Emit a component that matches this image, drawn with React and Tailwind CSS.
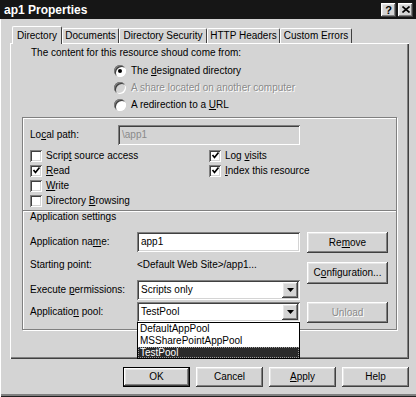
import React from "react";

const raised =
  "shadow-[inset_-1px_-1px_#404040,inset_1px_1px_#ffffff,inset_-2px_-2px_#808080,inset_2px_2px_#e6e6e6]";
const sunken =
  "shadow-[inset_1px_1px_#808080,inset_-1px_-1px_#ffffff,inset_2px_2px_#404040,inset_-2px_-2px_#d4d4d4]";

function U({ children }) {
  return <span className="underline underline-offset-[1px]">{children}</span>;
}

function Radio({ checked, disabled }) {
  return (
    <div
      className={`w-[12px] h-[12px] rounded-full flex items-center justify-center shrink-0 shadow-[inset_1px_1px_#808080,inset_-1px_-1px_#ffffff,inset_2px_2px_#404040] ${
        disabled ? "bg-[#d4d4d4]" : "bg-white"
      }`}
    >
      {checked && <div className="w-[4px] h-[4px] rounded-full bg-black" />}
    </div>
  );
}

function Check({ checked }) {
  return (
    <div className={`w-[12px] h-[12px] bg-white shrink-0 ${sunken} flex items-center justify-center`}>
      {checked && (
        <svg width="9" height="9" viewBox="0 0 9 9">
          <polyline points="1.5,4 3.5,6.5 7.5,1.5" fill="none" stroke="#000" strokeWidth="1.7" />
        </svg>
      )}
    </div>
  );
}

function CheckRow({ checked, children }) {
  return (
    <div className="h-[15px] flex items-center gap-[4px] whitespace-nowrap">
      <Check checked={checked} />
      <span>{children}</span>
    </div>
  );
}

function Button({ children, className = "", disabled, isDefault }) {
  return (
    <div
      className={`flex items-center justify-center bg-[#d4d4d4] whitespace-nowrap ${
        isDefault ? "border border-black" : ""
      } ${className}`}
    >
      <div className={`w-full h-full flex items-center justify-center ${raised}`}>
        <span className={disabled ? "text-[#8a8a8a] [text-shadow:1px_1px_0_#ffffff]" : ""}>{children}</span>
      </div>
    </div>
  );
}

function Arrow() {
  return (
    <div className={`w-[16px] h-[16px] bg-[#d4d4d4] ${raised} flex items-center justify-center`}>
      <svg width="7" height="4" viewBox="0 0 7 4">
        <polygon points="0,0 7,0 3.5,4" fill="#000" />
      </svg>
    </div>
  );
}

function Select({ value, children }) {
  return (
    <div className={`relative w-[163px] h-[20px] bg-white ${sunken} flex items-center pl-[4px] pr-[2px]`}>
      <span className="flex-1">{value}</span>
      <Arrow />
      {children}
    </div>
  );
}

function Tab({ children, selected, className = "" }) {
  return (
    <div
      className={`flex items-center justify-center whitespace-nowrap bg-[#d4d4d4] border-t border-l border-white border-r border-r-[#404040] rounded-t-[2px] ${
        selected ? "h-[18px] -mb-[1px] relative z-10" : "h-[15px]"
      } ${className}`}
    >
      {children}
    </div>
  );
}

export default function App() {
  return (
    <div className="w-[416px] h-[397px] bg-[#d4d4d4] flex flex-col text-[10px] leading-[12px] text-black font-['Liberation_Sans',Arial,sans-serif] overflow-hidden shadow-[inset_1px_0_#ffffff,inset_0_-1px_#202020,inset_0_-3px_#808080]">
      {/* Title bar */}
      <div className="h-[19px] bg-[#161616] flex items-center justify-between pl-[4px] pr-[3px] shrink-0">
        <span className="text-white font-bold text-[12px] leading-[14px]">ap1 Properties</span>
        <div className="flex gap-[2px]">
          <div className={`w-[15px] h-[14px] bg-[#d4d4d4] ${raised} flex items-center justify-center font-bold text-[11px]`}>
            ?
          </div>
          <div className={`w-[15px] h-[14px] bg-[#d4d4d4] ${raised} flex items-center justify-center`}>
            <svg width="8" height="7" viewBox="0 0 8 7">
              <path d="M0.5 0.5 L7.5 6.5 M7.5 0.5 L0.5 6.5" stroke="#000" strokeWidth="1.6" />
            </svg>
          </div>
        </div>
      </div>

      {/* Body */}
      <div className="px-[10px] pt-[7px]">
        <div className="flex items-end h-[17px] pl-[2px]">
          <Tab selected className="w-[50px]">Directory</Tab>
          <Tab className="w-[57px]">Documents</Tab>
          <Tab className="w-[88px]">Directory Security</Tab>
          <Tab className="w-[73px]">HTTP Headers</Tab>
          <Tab className="w-[72px]">Custom Errors</Tab>
        </div>
        <div className="w-[399px] h-[316px] shadow-[inset_1px_1px_#ffffff,inset_-1px_-1px_#404040,inset_-2px_-2px_#808080]">
          <div className="pl-[21px] pt-[5px] h-[15px] leading-[10px]">The content for this resource shoud come from:</div>
          <div className="pl-[104px] mt-[4px] flex flex-col">
            <div className="h-[17px] flex items-center gap-[5px]">
              <Radio checked />
              <span>
                The <U>d</U>esignated directory
              </span>
            </div>
            <div className="h-[17px] flex items-center gap-[5px]">
              <Radio disabled />
              <span className="text-[#8a8a8a] [text-shadow:1px_1px_0_#ffffff]">A share located on another computer</span>
            </div>
            <div className="h-[17px] flex items-center gap-[5px]">
              <Radio />
              <span>
                A redirection to a <U>U</U>RL
              </span>
            </div>
          </div>

          {/* Group box */}
          <div className="ml-[12px] mt-[4px] w-[375px] h-[213px] border border-[#808080] shadow-[inset_1px_1px_#ffffff,1px_1px_#ffffff]">
            <div className="pl-[7px] pt-[7px]">
              <div className="h-[20px] flex items-center">
                <span className="w-[88px]">
                  Lo<U>c</U>al path:
                </span>
                <div className={`w-[182px] h-[20px] bg-[#d4d4d4] ${sunken} flex items-center pl-[4px] text-[#8a8a8a]`}>
                  \app1
                </div>
              </div>
              <div className="mt-[3px] flex">
                <div className="w-[179px] flex flex-col">
                  <CheckRow>
                    Scrip<U>t</U> source access
                  </CheckRow>
                  <CheckRow checked>
                    <U>R</U>ead
                  </CheckRow>
                  <CheckRow>
                    <U>W</U>rite
                  </CheckRow>
                  <CheckRow>
                    Directory <U>B</U>rowsing
                  </CheckRow>
                </div>
                <div className="flex flex-col">
                  <CheckRow checked>
                    Log <U>v</U>isits
                  </CheckRow>
                  <CheckRow checked>
                    <U>I</U>ndex this resource
                  </CheckRow>
                </div>
              </div>
            </div>
            <div className="mt-[2px] h-[2px] border-t border-[#808080] border-b border-b-white" />
            <div className="pl-[7px]">
              <div className="h-[10px] leading-[10px]">Application settings</div>
              <div className="mt-[10px] flex gap-[7px]">
                <div className="w-[270px] flex flex-col">
                  <div className="h-[20px] flex items-center">
                    <span className="w-[107px]">
                      Application na<U>m</U>e:
                    </span>
                    <div className={`w-[163px] h-[20px] bg-white ${sunken} flex items-center pl-[4px]`}>app1</div>
                  </div>
                  <div className="mt-[4px] h-[18px] flex items-center">
                    <span className="w-[107px]">Starting point:</span>
                    <span>&lt;Default Web Site&gt;/app1...</span>
                  </div>
                  <div className="mt-[6px] h-[20px] flex items-center">
                    <span className="w-[107px]">
                      Execute <U>p</U>ermissions:
                    </span>
                    <Select value="Scripts only" />
                  </div>
                  <div className="mt-[2px] h-[20px] flex items-center">
                    <span className="w-[107px]">
                      Applicatio<U>n</U> pool:
                    </span>
                    <Select value="TestPool">
                      <div className="absolute left-0 top-full w-[163px] bg-white border border-black z-20 flex flex-col">
                        <div className="h-[12px] flex items-center pl-[2px]">DefaultAppPool</div>
                        <div className="h-[12px] flex items-center pl-[2px]">MSSharePointAppPool</div>
                        <div className="h-[11px] flex items-center pl-[2px] bg-[#2a2a2a] text-white outline outline-1 outline-dotted outline-[#9a9a9a] -outline-offset-1">
                          TestPool
                        </div>
                      </div>
                    </Select>
                  </div>
                </div>
                <div className="flex flex-col">
                  <Button className="w-[81px] h-[21px]">
                    Re<U>m</U>ove
                  </Button>
                  <Button className="w-[81px] h-[22px] mt-[9px]">
                    C<U>o</U>nfiguration...
                  </Button>
                  <Button className="w-[81px] h-[21px] mt-[18px]" disabled>
                    Unload
                  </Button>
                </div>
              </div>
            </div>
          </div>
        </div>
      </div>

      {/* Bottom buttons */}
      <div className="mt-[8px] flex justify-end gap-[6px] pr-[7px]">
        <Button isDefault className="w-[67px] h-[20px]">
          OK
        </Button>
        <Button className="w-[67px] h-[20px]">Cancel</Button>
        <Button className="w-[67px] h-[20px]">
          <U>A</U>pply
        </Button>
        <Button className="w-[67px] h-[20px]">Help</Button>
      </div>
    </div>
  );
}
